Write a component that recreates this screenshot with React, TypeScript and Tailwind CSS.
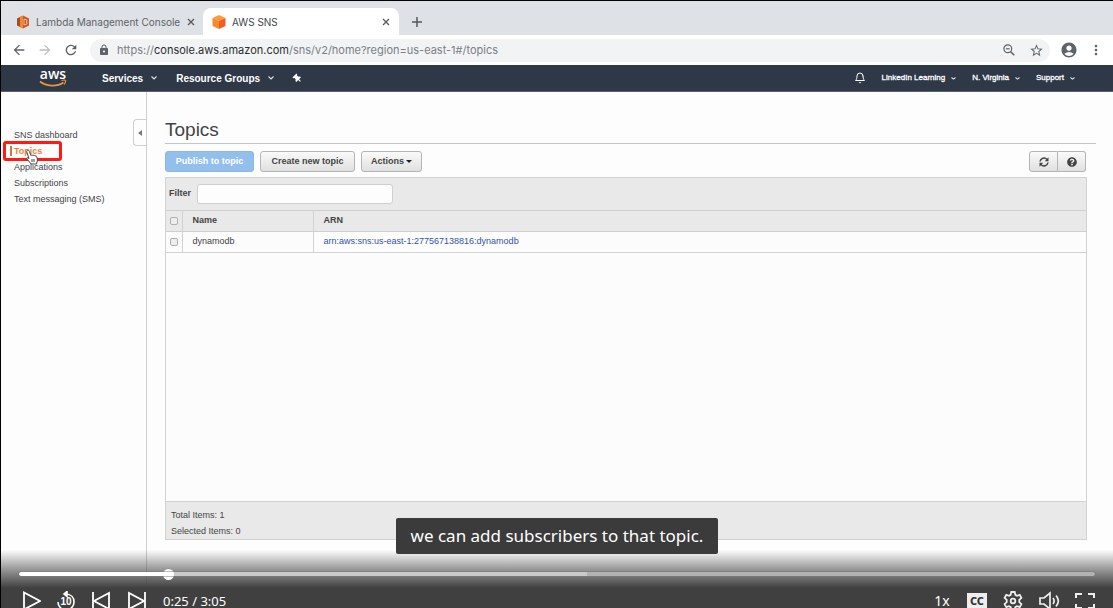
import React from "react";
import {
  MdAccountCircle,
  MdArrowBack,
  MdArrowForward,
  MdLock,
  MdMoreVert,
  MdRefresh,
  MdStarBorder,
} from "react-icons/md";
import { FaQuestionCircle, FaThumbtack } from "react-icons/fa";
import { FiBell } from "react-icons/fi";

function TabTitle({ children }: { children: React.ReactNode }) {
  return <span className="flex-1 whitespace-nowrap text-[10px] leading-4">{children}</span>;
}

function CloseIcon() {
  return (
    <svg viewBox="0 0 8 8" className="size-2" stroke="#55585c" strokeWidth="1.3" fill="none">
      <path d="M1 1l6 6M7 1L1 7" />
    </svg>
  );
}

function LambdaIcon() {
  return (
    <svg viewBox="0 0 14 14" className="size-[14px] shrink-0">
      <path d="M1 3.500L4 2v10L1 10.500z" fill="#9d5025" />
      <path d="M4 1.500L7 .5v13l-3-1z" fill="#f58536" />
      <path d="M7 .5L13 3.500v7L7 13.500z" fill="#c95a25" />
      <path d="M8 4l3 1v1.500l-1 .5 1 .5V9l-3 1z" fill="none" stroke="#fbd0ae" strokeWidth=".8" />
    </svg>
  );
}

function CubeIcon() {
  return (
    <svg viewBox="0 0 14 14" className="size-[14px] shrink-0">
      <path d="M7 0l6.500 3L7 6 .5 3z" fill="#ff9b37" />
      <path d="M.5 3L7 6v8L.5 11z" fill="#f98a2b" />
      <path d="M13.500 3L7 6v8l6.500-3z" fill="#f45b25" />
    </svg>
  );
}

function BrowserTabs() {
  return (
    <div className="flex h-[34px] shrink-0 items-end bg-[#dee1e6] font-[Inter,sans-serif]">
      <div className="flex h-[27px] w-[202px] items-center gap-[6px] pl-[15px] pr-2 text-[#5f6368]">
        <LambdaIcon />
        <TabTitle>Lambda Management Console</TabTitle>
        <button aria-label="Close Lambda Management Console"><CloseIcon /></button>
      </div>
      <div className="flex h-[27px] w-[196px] items-center gap-[6px] rounded-t-lg bg-white pl-[9px] pr-[9px] text-[#44474a]">
        <CubeIcon />
        <TabTitle>AWS SNS</TabTitle>
        <button aria-label="Close AWS SNS"><CloseIcon /></button>
      </div>
      <button aria-label="New tab" className="flex h-[27px] w-9 items-center justify-center">
        <svg viewBox="0 0 10 10" className="size-[10px]" stroke="#55585c" strokeWidth="1.500">
          <path d="M5 0v10M0 5h10" />
        </svg>
      </button>
    </div>
  );
}

function ZoomOutIcon() {
  return (
    <svg viewBox="0 0 12 12" className="size-3" fill="none" stroke="#5f6368" strokeWidth="1.200">
      <circle cx="4.800" cy="4.800" r="3.900" />
      <path d="M7.700 7.700l3.600 3.600" strokeWidth="1.600" />
      <path d="M2.900 4.800h3.800" />
    </svg>
  );
}

function BrowserToolbar() {
  return (
    <div className="flex h-[30px] shrink-0 items-center bg-white pr-[9px] font-[Inter,sans-serif] text-[#5f6368]">
      <div className="flex w-[89px] items-center gap-[10px] pl-[10px]">
        <button aria-label="Back"><MdArrowBack className="size-4" /></button>
        <button aria-label="Forward" className="text-[#bcbec1]"><MdArrowForward className="size-4" /></button>
        <button aria-label="Reload"><MdRefresh className="size-4" /></button>
      </div>
      <div className="flex h-[23px] flex-1 items-center rounded-full bg-[#f1f3f4] pl-2 pr-[6px]">
        <MdLock className="size-3" />
        <p className="flex-1 pl-[7px] text-[11px] leading-4 text-[#7b7f84]">
          https://<span className="text-[#2b2d30]">console.aws.amazon.com</span>/sns/v2/home?region=us-east-1#/topics
        </p>
        <div className="flex items-center gap-[14px]">
          <button aria-label="Zoom"><ZoomOutIcon /></button>
          <button aria-label="Bookmark"><MdStarBorder className="size-[15px]" /></button>
        </div>
      </div>
      <div className="flex items-center gap-[10px] pl-[10px]">
        <button aria-label="Profile"><MdAccountCircle className="size-[18px]" /></button>
        <button aria-label="More"><MdMoreVert className="size-4" /></button>
      </div>
    </div>
  );
}

function Chevron() {
  return (
    <svg viewBox="0 0 6 4" className="h-1 w-[6px]" fill="none" stroke="#dfe2e6" strokeWidth="1.100">
      <path d="M.5 .5L3 3 5.500 .5" />
    </svg>
  );
}

function Caret() {
  return (
    <svg viewBox="0 0 5 3" className="h-[3px] w-[5px]" fill="none" stroke="#dfe2e6" strokeWidth="1.100">
      <path d="M.5 .5l2 1.600 2-1.600" />
    </svg>
  );
}

function AwsLogo() {
  return (
    <a href="#home" aria-label="aws" className="flex w-7 flex-col items-center">
      <span className="font-['Open_Sans',sans-serif] text-[14px] font-semibold leading-[10px] text-white">aws</span>
      <svg viewBox="0 0 28 8" className="h-2 w-7" fill="none" stroke="#e8963a" strokeWidth="1.700">
        <path d="M1 2.500C7 7.500 18 8 24.500 3.500" />
        <path d="M22.500 1.500c2-.6 3.500-.6 4 0 .4.800-.3 2.500-1.300 4" strokeWidth="1.200" />
      </svg>
    </a>
  );
}

function AwsNav() {
  return (
    <nav className="flex h-[27px] shrink-0 items-center border-b border-[#59616d] bg-[#2e3847] pl-[38px] pr-[38px] text-white">
      <AwsLogo />
      <div className="flex flex-1 items-center gap-[19px] pl-[35px] text-[10px] font-bold">
        <button className="flex items-center gap-2">Services <Chevron /></button>
        <button className="flex items-center gap-2">Resource Groups <Chevron /></button>
        <button aria-label="Pin shortcuts"><FaThumbtack className="size-[9px] -rotate-45" /></button>
      </div>
      <div className="flex items-center gap-4 text-[8px] [-webkit-text-stroke:0.3px_white]">
        <button aria-label="Notifications"><FiBell className="size-3" /></button>
        <button className="flex items-center gap-[6px]">LinkedIn Learning <Caret /></button>
        <button className="flex items-center gap-[6px]">N. Virginia <Caret /></button>
        <button className="flex items-center gap-[6px]">Support <Caret /></button>
      </div>
    </nav>
  );
}

function HandCursor() {
  return (
    <svg viewBox="0 0 14 16" className="absolute left-6 top-[6px] h-4 w-[14px]" fill="#fff" stroke="#444" strokeWidth="1">
      <path d="M2 1.500c1-1 2 0 2.400 1L6 6.500c.4-1 1.800-.8 2 .2.500-.8 1.800-.5 2 .4.700-.6 1.700-.1 1.800.8L12.500 11l-1 4H6L2.500 10.500C1 9 2 8 3.500 9.200L4 9.500 1.800 3c-.2-.6-.2-1 .2-1.500z" />
      <path d="M7 10v3M9 10v3" />
    </svg>
  );
}

function Sidebar() {
  const item = "block h-4 pl-[13px] leading-4";
  return (
    <aside className="flex w-[146px] shrink-0 border-r border-[#cfcfd1] pt-[27px]">
      <ul className="flex-1 pt-2 text-[9px] whitespace-nowrap">
        <li><a href="#dashboard" className={item}>SNS dashboard</a></li>
        <li className="relative">
          <a href="#topics" className="block h-4 pl-[9px] leading-4">
            <span className="border-l-2 border-[#c97b3a] pl-[2px] font-bold text-[#ee8236]">Topics</span>
          </a>
          <span className="absolute -top-[2px] left-[2px] h-5 w-[59px] rounded-[3px] border-[3px] border-[#ff1a12]" />
          <HandCursor />
        </li>
        <li><a href="#applications" className={item}>Applications</a></li>
        <li><a href="#subscriptions" className={item}>Subscriptions</a></li>
        <li><a href="#sms" className={item}>Text messaging (SMS)</a></li>
      </ul>
      <button aria-label="Collapse menu" className="flex h-[27px] w-[13px] items-center justify-center rounded-l border border-r-0 border-[#cfcfd1]">
        <svg viewBox="0 0 4 6" className="h-[6px] w-1" fill="#777"><path d="M4 0v6L0 3z" /></svg>
      </button>
    </aside>
  );
}

const grayButton =
  "h-[21px] border border-[#b5b5b5] bg-linear-to-b from-[#fafafa] to-[#e0e0e0] text-[9px] font-bold text-[#444]";

function RefreshGlyph() {
  return (
    <svg viewBox="0 0 10 10" className="size-[10px]" fill="none" stroke="#444" strokeWidth="1.500">
      <path d="M1 4.500A4 4 0 0 1 8 2.500M9 5.500A4 4 0 0 1 2 7.500" />
      <path d="M9.500 .3v4H5.800zM.5 9.700v-4h3.700z" fill="#444" stroke="none" />
    </svg>
  );
}

function Topics() {
  const checkbox = "block size-2 appearance-none rounded-[2px] border border-[#b0b0b0] bg-[#eee]";
  return (
    <main className="flex flex-1 flex-col pb-[68px] pl-[18px] pt-[26px]">
      <h1 className="mr-[17px] h-[26px] border-b border-[#c6c6c8] text-[19px] leading-[23px] text-[#444]">Topics</h1>
      <div className="mr-[27px] mt-[7px] flex gap-[6px]">
        <button disabled className="h-[21px] w-[89px] rounded-[3px] border border-[#8db8e4] bg-[#92bfec] text-[9px] font-bold text-white">Publish to topic</button>
        <button className={`${grayButton} w-[95px] rounded-[3px]`}>Create new topic</button>
        <button className={`${grayButton} flex w-[61px] items-center justify-center gap-[2px] rounded-[3px]`}>
          Actions
          <svg viewBox="0 0 6 3" className="h-[3px] w-[6px]" fill="#222"><path d="M0 0h6L3 3z" /></svg>
        </button>
        <div className="ml-auto flex">
          <button aria-label="Refresh" className={`${grayButton} flex w-[29px] items-center justify-center rounded-l-[3px]`}><RefreshGlyph /></button>
          <button aria-label="Help" className={`${grayButton} flex w-[28px] items-center justify-center rounded-r-[3px] border-l-0`}><FaQuestionCircle className="size-[10px]" /></button>
        </div>
      </div>
      <section className="mr-[26px] mt-[5px] flex flex-1 flex-col border border-[#d2d2d2] bg-[#fcfcfd] text-[9px]">
        <div className="flex h-8 items-center gap-[6px] bg-[#e9e9e9] pl-[3px]">
          <label htmlFor="filter" className="font-bold text-[#444]">Filter</label>
          <input id="filter" className="h-5 w-[196px] rounded-[3px] border border-[#cfcfcf] bg-[#fdfdfe] px-1" />
        </div>
        <table className="w-full table-fixed border-collapse text-left">
          <thead>
            <tr className="h-[21px] border-y border-[#cfcfcf] bg-[#e9e9e9] text-[#444]">
              <th className="w-4 border-r border-[#d2d2d2] p-0 pl-1"><input type="checkbox" aria-label="Select all topics" className={checkbox} /></th>
              <th className="w-[131px] border-r border-[#d2d2d2] p-0 pl-[10px]">Name</th>
              <th className="p-0 pl-[10px]">ARN</th>
            </tr>
          </thead>
          <tbody>
            <tr className="h-[21px] border-b border-[#d2d2d2]">
              <td className="border-r border-[#d2d2d2] p-0 pl-1"><input type="checkbox" aria-label="Select dynamodb" className={checkbox} /></td>
              <td className="border-r border-[#d2d2d2] p-0 pl-[10px]">dynamodb</td>
              <td className="p-0 pl-[10px]"><a href="#arn" className="text-[#3553a8]">arn:aws:sns:us-east-1:277567138816:dynamodb</a></td>
            </tr>
          </tbody>
        </table>
        <div className="flex-1" />
        <footer className="h-[38px] border-t border-[#d2d2d2] bg-[#e9e9e9] pl-[5px] pt-[5px] leading-4 text-[#444]">
          <p>Total Items: 1</p>
          <p>Selected Items: 0</p>
        </footer>
      </section>
    </main>
  );
}

function PlayerControls() {
  return (
    <div className="absolute inset-x-0 bottom-0 flex h-[58px] flex-col overflow-hidden bg-[linear-gradient(to_bottom,transparent,#40404080_18px,#404040_38px)] font-['Noto_Sans',sans-serif] text-white">
      <input
        type="range"
        aria-label="Seek"
        min={0}
        max={185}
        defaultValue={25}
        className="ml-[18px] mr-[18px] mt-[22px] h-1 shrink-0 appearance-none rounded-full bg-[linear-gradient(to_right,#fff_13.7%,#c9cac9_13.7%,#c9cac9_52.8%,#b2b2b2_52.8%)] outline outline-[#77777780] [&::-webkit-slider-thumb]:size-[11px] [&::-webkit-slider-thumb]:appearance-none [&::-webkit-slider-thumb]:rounded-full [&::-webkit-slider-thumb]:bg-white"
      />
      <div className="mt-[11px] flex h-[28px] shrink-0 items-center pl-5 pr-[18px]">
        <div className="flex items-center gap-4">
          <button aria-label="Play">
            <svg viewBox="0 0 20 20" className="size-5" fill="none" stroke="#fff" strokeWidth="1.800"><path d="M3 1.500v17L19 10z" /></svg>
          </button>
          <button aria-label="Back 10 seconds" className="relative h-5 w-[18px]">
            <svg viewBox="0 0 18 20" className="h-5 w-[18px]" fill="none" stroke="#fff" strokeWidth="1.600">
              <path d="M8.500 3C14 3 17 6.500 17 11s-3.500 8-8 8-8-3.500-8-8" /><path d="M10 .5L7 3l3 2.500z" fill="#fff" />
            </svg>
            <span className="absolute inset-x-0 top-[6px] h-[10px] text-center font-['Liberation_Sans',sans-serif] text-[10px] font-bold leading-[10px]">10</span>
          </button>
          <button aria-label="Previous">
            <svg viewBox="0 0 20 20" className="size-5" fill="none" stroke="#fff" strokeWidth="1.800"><path d="M2 1v18M18 2v16L3 10z" /></svg>
          </button>
          <button aria-label="Next">
            <svg viewBox="0 0 20 20" className="size-5" fill="none" stroke="#fff" strokeWidth="1.800"><path d="M18 1v18M2 2v16l15-8z" /></svg>
          </button>
        </div>
        <span className="flex-1 pl-4 text-[13px] leading-3">0:25 / 3:05</span>
        <div className="flex items-center gap-4">
          <button aria-label="Playback speed" className="w-[18px] text-[14px] leading-3">1x</button>
          <button aria-label="Captions" className="flex h-4 w-5 items-center justify-center bg-[#eee] text-[11px] font-extrabold leading-3 text-[#333]">CC</button>
          <button aria-label="Settings">
            <svg viewBox="0 0 20 20" className="size-5" fill="none" stroke="#eee" strokeWidth="1.800">
              <path d="M8.300 1h3.400l.6 2.800 1.700 1 2.700-.9 1.700 2.900-2.100 2v2.400l2.100 2-1.700 2.900-2.700-.9-1.700 1-.6 2.800H8.300l-.6-2.800-1.700-1-2.700.9-1.700-2.900 2.100-2V8.800l-2.100-2 1.700-2.900 2.700.9 1.700-1z" />
              <circle cx="10" cy="10" r="2.300" />
            </svg>
          </button>
          <button aria-label="Volume">
            <svg viewBox="0 0 22 20" className="h-5 w-[22px]" fill="none" stroke="#eee" strokeWidth="1.700">
              <path d="M1 7h4l6-5v16l-6-5H1zM14 7c1.500 2 1.500 4 0 6M17 4.500c3 3.500 3 7.500 0 11" />
            </svg>
          </button>
          <button aria-label="Full screen" className="-ml-[2px]">
            <svg viewBox="0 0 20 20" className="size-5" fill="none" stroke="#eee" strokeWidth="2">
              <path d="M1 7V3h6M13 3h6v4M19 13v4h-6M7 17H1v-4" />
            </svg>
          </button>
        </div>
      </div>
    </div>
  );
}

export default function App() {
  return (
    <div className="relative flex h-screen flex-col overflow-hidden border-l border-t border-black bg-[#fdfdfe] font-['Liberation_Sans',Arial,sans-serif] text-[#444]">
      <BrowserTabs />
      <BrowserToolbar />
      <AwsNav />
      <div className="flex min-h-0 flex-1">
        <Sidebar />
        <Topics />
      </div>
      <PlayerControls />
      <div className="absolute inset-x-0 bottom-[54px] flex justify-center">
        <p className="rounded-[2px] bg-[#3b3b3b] px-[15px] py-[6px] font-['Noto_Sans',sans-serif] text-[17px] leading-6 text-white">we can add subscribers to that topic.</p>
      </div>
    </div>
  );
}
